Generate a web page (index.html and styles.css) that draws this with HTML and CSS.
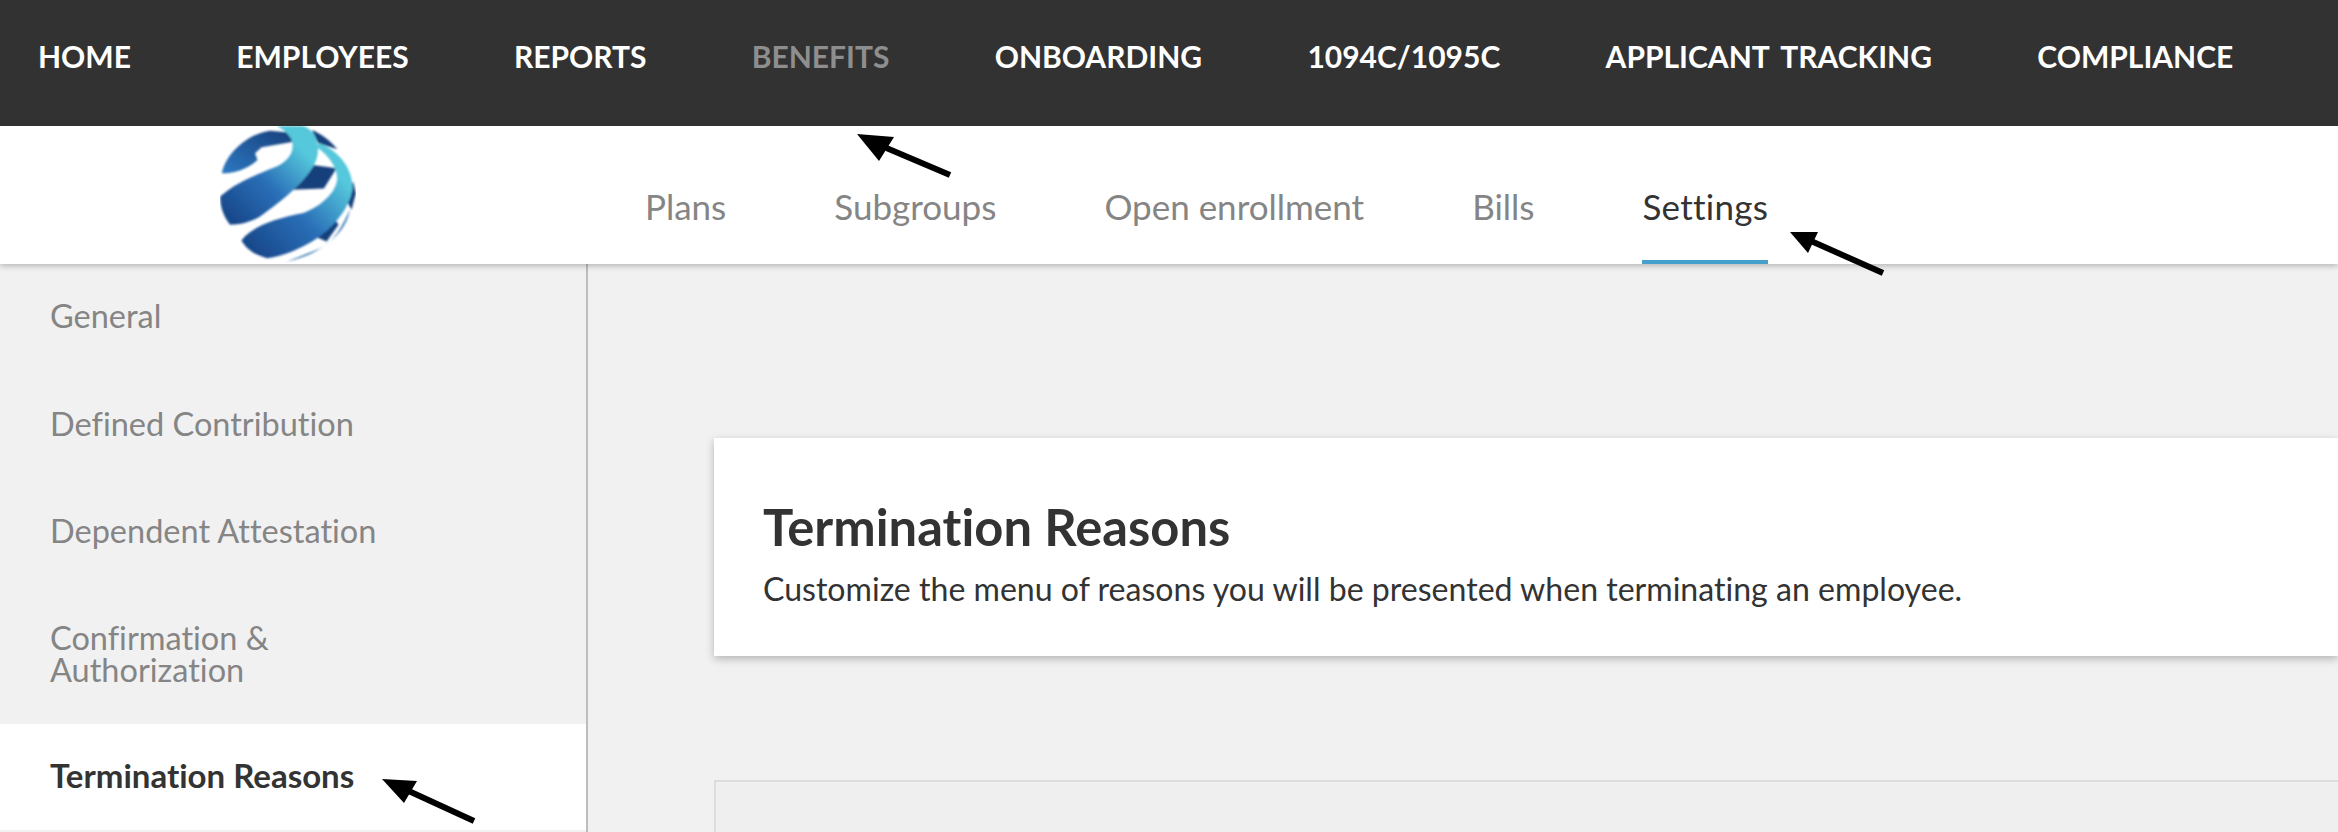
FILE: index.html
```html
<!DOCTYPE html>
<html lang="en">
<head>
    <meta charset="UTF-8">
    <title>Termination Reasons</title>
    <link rel="stylesheet" href="styles.css">
</head>
<body>

<!-- top nav -->
<nav class="top-nav">
    <a>HOME</a>
    <a>EMPLOYEES</a>
    <a>REPORTS</a>
    <a class="current">BENEFITS</a>
    <a>ONBOARDING</a>
    <a>1094C/1095C</a>
    <a>APPLICANT TRACKING</a>
    <a>COMPLIANCE</a>
</nav>

<!-- logo + tabs -->
<div class="sub-nav">
    <div class="logo-box">
        <svg class="logo" viewBox="120 48 408 412">
            <defs>
                <linearGradient id="band" x1="0" y1="1" x2="1" y2="0">
                    <stop offset="0" stop-color="#143f80"/>
                    <stop offset="0.45" stop-color="#2a6fb8"/>
                    <stop offset="0.8" stop-color="#55c8dc"/>
                </linearGradient>
                <linearGradient id="wedge" x1="0" y1="1" x2="1" y2="0">
                    <stop offset="0" stop-color="#2d78c0"/>
                    <stop offset="1" stop-color="#173f7c"/>
                </linearGradient>
                <filter id="soft"><feGaussianBlur stdDeviation="3"/></filter>
            </defs>
            <g filter="url(#soft)">
                <path d="M125 190C135 140 190 75 270 62L335 68L340 95L245 112L225 130L232 150C200 180 160 190 125 190Z" fill="url(#wedge)"/>
                <path d="M395 60C425 72 450 90 472 118L415 100Z" fill="#173f7c"/>
                <path d="M398 165L470 175L432 236L335 240Z" fill="#173f7c"/>
                <path d="M520 215L528 250L515 300L498 268Z" fill="#173f7c"/>
                <path d="M462 325L476 345L440 395L400 378Z" fill="#173f7c"/>
                <path d="M510 300C500 360 440 430 320 456L400 425C440 410 470 390 510 300Z" fill="#2a6fb0"/>
                <path d="M290 48H370C405 60 420 100 412 140C400 190 340 250 240 320C210 338 180 345 150 345C130 320 120 290 120 260C170 215 240 190 290 170C330 150 345 120 335 90C325 70 310 58 290 48Z" fill="url(#band)"/>
                <path d="M405 108L420 100C480 125 520 180 518 235C510 300 450 370 370 410C330 430 300 440 262 446C225 435 200 420 184 392C215 350 290 325 370 310C420 290 470 250 472 205C470 165 440 130 405 108Z" fill="url(#band)"/>
            </g>
        </svg>
    </div>
    <div class="tabs">
        <a>Plans</a>
        <a>Subgroups</a>
        <a>Open enrollment</a>
        <a>Bills</a>
        <a class="active">Settings</a>
    </div>
</div>

<div class="layout">
    <!-- left menu -->
    <aside class="side-menu">
        <a>General</a>
        <a>Defined Contribution</a>
        <a>Dependent Attestation</a>
        <a>Confirmation &amp; Authorization</a>
        <a class="active">Termination Reasons</a>
    </aside>

    <main class="content">
        <div class="card">
            <h1>Termination Reasons</h1>
            <p>Customize the menu of reasons you will be presented when terminating an employee.</p>
        </div>
        <div class="panel"></div>
    </main>
</div>

<!-- annotation arrows drawn over the page -->
<svg class="arrows" width="2338" height="832" viewBox="0 0 2338 832">
    <path d="M950 175L877 144" class="arrow-line"/>
    <path d="M857 134L894 137L879 161Z"/>
    <path d="M1883 273L1811 241" class="arrow-line"/>
    <path d="M1790 232L1818 232L1808 253Z"/>
    <path d="M474 821L400 787" class="arrow-line"/>
    <path d="M382 779L417 781L404 803Z"/>
</svg>

</body>
</html>
```

FILE: styles.css
```css
* {
    margin: 0;
    padding: 0;
    box-sizing: border-box;
}
html, body {
    height: 832px;
    overflow: hidden;
}
body {
    position: relative;
    background-color: #f1f1f1;
    color: #333;
    font-family: Lato, "Liberation Sans", sans-serif;
    font-variant-ligatures: none;
}
.top-nav {
    display: flex;
    align-items: center;
    gap: 105.3px;
    height: 126px;
    padding: 0 38px 15px;
    background-color: #323232;
}
.top-nav a {
    color: #fff;
    font-size: 30px;
    font-weight: 700;
    word-spacing: 5px;
    white-space: nowrap;
}
.top-nav a.current {
    color: #8e8e8e;
}
.sub-nav {
    position: relative;
    display: flex;
    height: 138px;
    background-color: #fff;
    box-shadow: 0 2px 6px rgba(0, 0, 0, 0.25);
}
.logo-box {
    width: 645px;
    padding-left: 220px;
    flex: none;
}
.logo {
    display: block;
    width: 136px;
    height: 137px;
}
.tabs {
    display: flex;
    gap: 108px;
}
.tabs a {
    height: 138px;
    padding-top: 58px;
    font-size: 35px;
    line-height: 44px;
    color: #858585;
    white-space: nowrap;
}
.tabs a.active {
    color: #333;
    letter-spacing: 0.25px;
    border-bottom: 4px solid #45a0cb;
}
.layout {
    display: flex;
    height: 568px;
}
.side-menu {
    width: 588px;
    flex: none;
    border-right: 2px solid #bdbdbd;
}
.side-menu a {
    display: block;
    height: 107px;
    padding: 36px 50px 0;
    font-size: 32.5px;
    line-height: 32px;
    color: #858585;
}
.side-menu a:nth-child(n+2) {
    padding-top: 37px;
}
.side-menu a:nth-child(4) {
    height: 139px;
    padding-right: 150px;
}
.side-menu a.active {
    height: 106px;
    padding-top: 35px;
    background-color: #fff;
    color: #333;
    font-size: 33px;
    font-weight: 700;
}
.content {
    flex: 1;
    padding: 174px 0 0 126px;
}
.card {
    height: 218px;
    padding: 60px 49px 0;
    background-color: #fff;
    box-shadow: 0 3px 8px rgba(0, 0, 0, 0.25);
}
.card h1 {
    font-size: 50.7px;
    line-height: 58px;
    font-weight: 700;
    color: #333;
}
.card p {
    margin-top: 13px;
    font-size: 32.08px;
    line-height: 40px;
    color: #333;
}
.panel {
    height: 52px;
    margin-top: 124px;
    background-color: #efefef;
    border: 2px solid #ddd;
    border-right: none;
    border-bottom: none;
}
.arrows {
    position: absolute;
    top: 0;
    left: 0;
}
.arrows path {
    fill: #000;
}
.arrows .arrow-line {
    fill: none;
    stroke: #000;
    stroke-width: 6;
}
```
